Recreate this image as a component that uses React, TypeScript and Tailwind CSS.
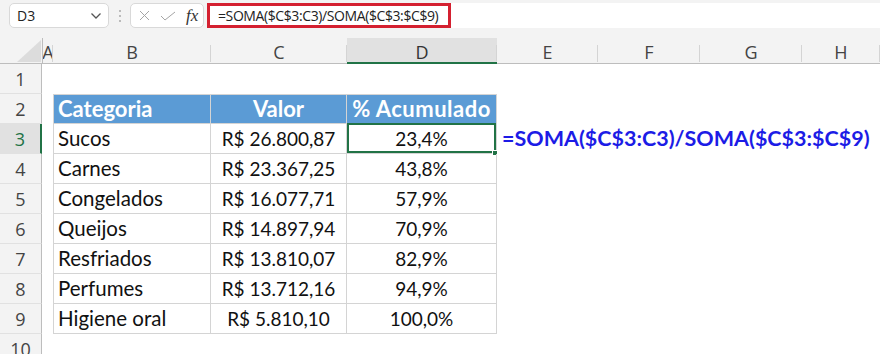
import React from "react";

const COLS = ["A", "B", "C", "D", "E", "F", "G", "H"];

const data: [string, string, string][] = [
  ["Sucos", "R$ 26.800,87", "23,4%"],
  ["Carnes", "R$ 23.367,25", "43,8%"],
  ["Congelados", "R$ 16.077,71", "57,9%"],
  ["Queijos", "R$ 14.897,94", "70,9%"],
  ["Resfriados", "R$ 13.810,07", "82,9%"],
  ["Perfumes", "R$ 13.712,16", "94,9%"],
  ["Higiene oral", "R$ 5.810,10", "100,0%"],
];

function Toolbar() {
  return (
    <div className="h-[38px] bg-[#f3f3f3] flex items-start pt-[3px] pl-[9px]">
      <div className="w-[100px] h-[25px] bg-white border border-[#d9d9d9] rounded-[5px] flex items-center justify-between pl-[7px] pr-[6px]">
        <span className="text-[14px] text-[#222] font-['Open_Sans',sans-serif]">D3</span>
        <svg width="12" height="8" viewBox="0 0 12 8">
          <path d="M1.5 1.5 L6 6 L10.5 1.5" fill="none" stroke="#555" strokeWidth="1.3" />
        </svg>
      </div>
      <div className="w-[21px] h-[25px] flex flex-col items-center justify-center gap-[3px]">
        <span className="w-[2px] h-[2px] bg-[#a8a8a8] rounded-full" />
        <span className="w-[2px] h-[2px] bg-[#a8a8a8] rounded-full" />
        <span className="w-[2px] h-[2px] bg-[#a8a8a8] rounded-full" />
      </div>
      <div className="w-[74px] h-[25px] bg-white border border-[#d9d9d9] rounded-[5px] flex items-center pl-[8px]">
        <svg width="11" height="11" viewBox="0 0 11 11">
          <path d="M1 1 L10 10 M10 1 L1 10" stroke="#a5a5a5" strokeWidth="1" fill="none" />
        </svg>
        <svg width="16" height="10" viewBox="0 0 16 10" className="ml-[10px]">
          <path d="M1 5 L5 9 L15 1" stroke="#a5a5a5" strokeWidth="1" fill="none" />
        </svg>
        <span className="ml-[10px] text-[17px] italic text-[#333] font-['Liberation_Serif',serif] leading-none">fx</span>
      </div>
      <div className="ml-[3px] flex-1 h-[25px] bg-white flex items-center">
        <div className="w-[244px] h-[25px] border-[3px] border-[#d42030] flex items-center pl-[8px]">
          <span className="text-[14px] text-[#222] font-['Open_Sans',sans-serif] whitespace-nowrap tracking-[-0.4px]">
            =SOMA($C$3:C3)/SOMA($C$3:$C$9)
          </span>
        </div>
      </div>
    </div>
  );
}

function ColHeader() {
  return (
    <>
      <div className="bg-[#f3f3f3] border-b border-[#bdbdbd] relative">
        <svg width="42" height="26" viewBox="0 0 42 26" className="block">
          <polygon points="17,24 41,2 41,24" fill="#dcdcdc" />
        </svg>
      </div>
      {COLS.map((c, i) => {
        const sel = c === "D";
        return (
          <div
            key={i}
            className={
              "relative overflow-hidden flex items-center justify-center text-[18px] leading-none font-['Open_Sans',sans-serif] pt-[3px] " +
              (sel
                ? "bg-[#e1e1e1] border-b-2 border-[#217346] text-[#333]"
                : "bg-[#f3f3f3] border-b border-[#bdbdbd] text-[#444]") +
              (i === 0 ? " border-l border-l-[#bdbdbd]" : "") +
              " after:content-[''] after:absolute after:right-0 after:top-[7px] after:bottom-[1px] after:w-px after:bg-[#d4d4d4]"
            }
          >
            {c}
          </div>
        );
      })}
    </>
  );
}

function RowHeader({ n }: { n: number }) {
  const sel = n === 3;
  return (
    <div
      className={
        "flex items-center justify-center text-[18px] leading-none font-['Open_Sans',sans-serif] border-b border-b-[#e1e1e1] " +
        (sel
          ? "bg-[#e1e1e1] border-r-2 border-r-[#217346] text-[#217346]"
          : "bg-[#f3f3f3] border-r border-r-[#bdbdbd] text-[#444]")
      }
    >
      {n}
    </div>
  );
}

const headFont = "font-['Lato',sans-serif] text-[22px] leading-none font-bold text-white";
const textFont = "font-['Lato',sans-serif] text-[20.5px] leading-none";
const numFont = "font-['Lato',sans-serif] text-[19px] leading-none";

export default function App() {
  const rows = [];
  for (let r = 1; r <= 10; r++) {
    const cells: React.ReactNode[] = [];
    cells.push(<RowHeader key="h" n={r} />);
    cells.push(<div key="a" />);
    if (r === 2) {
      cells.push(
        <div key="b" className={`bg-[#5b9bd5] border-t border-b border-l border-r border-[#d4d4d4] flex items-center pl-[4px] ${headFont}`}>
          Categoria
        </div>
      );
      cells.push(
        <div key="c" className={`bg-[#5b9bd5] border-t border-b border-r border-[#d4d4d4] flex items-center justify-center ${headFont}`}>
          Valor
        </div>
      );
      cells.push(
        <div key="d" className={`bg-[#5b9bd5] border-t border-b border-r border-[#d4d4d4] flex items-center justify-center whitespace-nowrap tracking-[0.5px] ${headFont}`}>
          % Acumulado
        </div>
      );
    } else if (r >= 3 && r <= 9) {
      const [cat, val, pct] = data[r - 3];
      cells.push(
        <div key="b" className={`border-b border-l border-r border-[#d4d4d4] flex items-center pl-[4px] text-[#111] whitespace-nowrap ${textFont}`}>
          {cat}
        </div>
      );
      cells.push(
        <div key="c" className={`border-b border-r border-[#d4d4d4] flex items-center justify-center text-[#111] whitespace-nowrap ${numFont}`}>
          {val}
        </div>
      );
      cells.push(
        <div key="d" className={`relative border-b border-r border-[#d4d4d4] flex items-center justify-center text-[#111] whitespace-nowrap ${numFont}`}>
          {pct}
          {r === 3 && (
            <>
              <div className="absolute left-0 -top-px right-0 bottom-0 border-2 border-[#217346]" />
              <div className="absolute -right-[2px] -bottom-[3px] w-[6px] h-[6px] bg-[#217346] border border-white" />
            </>
          )}
        </div>
      );
    } else {
      cells.push(<div key="b" />, <div key="c" />, <div key="d" />);
    }
    if (r === 3) {
      cells.push(
        <div key="e" className="flex items-center pl-[5px] overflow-visible">
          <span className="whitespace-nowrap font-['Lato',sans-serif] font-bold text-[21.5px] leading-none text-[#1c1ce6]">
            =SOMA($C$3:C3)/SOMA($C$3:$C$9)
          </span>
        </div>
      );
    } else {
      cells.push(<div key="e" />);
    }
    cells.push(<div key="f" />, <div key="g" />, <div key="h" />);
    rows.push(<React.Fragment key={r}>{cells}</React.Fragment>);
  }

  return (
    <div className="w-[880px] h-[354px] overflow-hidden bg-white">
      <Toolbar />
      <div className="grid grid-cols-[42px_11px_158px_136px_150px_101px_102px_102px_78px] grid-rows-[26px_repeat(10,30px)]">
        <ColHeader />
        {rows}
      </div>
    </div>
  );
}
